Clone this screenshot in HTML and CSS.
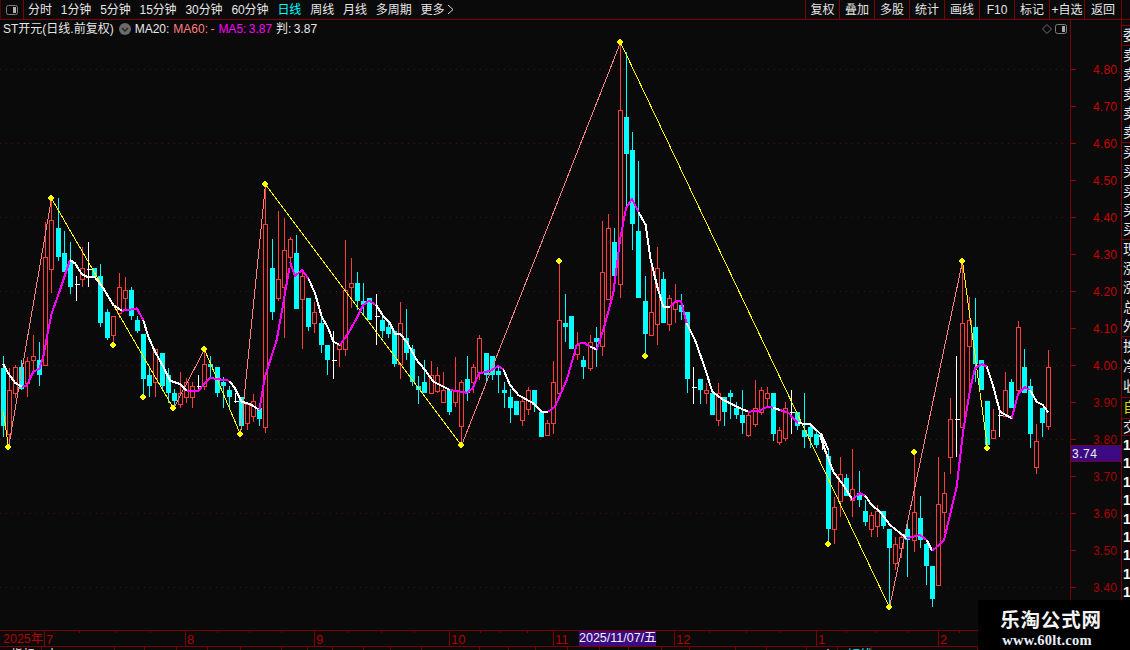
FILE: index.html
```html
<!DOCTYPE html>
<html lang="zh">
<head>
<meta charset="utf-8">
<title>ST开元 日线</title>
<link rel="stylesheet" href="styles.css">
</head>
<body>
<div class="app">
  <header class="toolbar">
    <div class="logo-cell">
      <svg class="split-icon" width="12" height="10" viewBox="0 0 12 10"><rect x=".5" y=".5" width="11" height="9" rx="2" fill="none" stroke="#808080"/><rect x="7" y="2" width="3" height="6" fill="#b0b0b0"/></svg>
    </div>
    <nav class="periods">
      <span>分时</span><span>1分钟</span><span>5分钟</span><span>15分钟</span><span>30分钟</span><span>60分钟</span>
      <span class="active">日线</span><span>周线</span><span>月线</span><span>多周期</span>
      <span class="more">更多<svg width="7" height="11" viewBox="0 0 7 11"><path d="M1 1l5 4.5L1 10" fill="none" stroke="#d8d8d8"/></svg></span>
    </nav>
    <nav class="actions">
      <span class="narrow">复权</span><span>叠加</span><span>多股</span><span>统计</span><span>画线</span><span>F10</span><span>标记</span><span>+自选</span><span class="wide">返回</span>
    </nav>
  </header>

  <main class="main">
    <section class="chart">
      <svg id="plot" class="plot" viewBox="0 20 1070 610" width="1070" height="610"></svg>
      <div class="legend">
        <span>ST开元(日线.前复权)</span>
        <svg class="chev" width="12" height="12" viewBox="0 0 12 12"><circle cx="6" cy="6" r="6" fill="#6a6a6a"/><path d="M3 5l3 3 3-3" fill="none" stroke="#222" stroke-width="1.4"/></svg>
        <span class="l-white">MA20:</span>
        <span class="l-pink">MA60: -</span>
        <span class="l-mag">MA5: 3.87</span>
        <span class="l-white">判: 3.87</span>
      </div>
      <div class="corner">
        <svg width="10" height="10" viewBox="0 0 10 10"><path d="M5 .5L9.5 5 5 9.5 .5 5z" fill="none" stroke="#6e6e6e"/></svg>
        <svg width="12" height="10" viewBox="0 0 12 10"><rect x=".5" y=".5" width="11" height="9" rx="2" fill="none" stroke="#808080"/><rect x="7" y="2" width="3" height="6" fill="#a8a8a8"/></svg>
      </div>
    </section>

    <aside class="axis">
      <div class="tick up">4.80</div><div class="tick up">4.70</div><div class="tick up">4.60</div><div class="tick up">4.50</div>
      <div class="tick up">4.40</div><div class="tick up">4.30</div><div class="tick up">4.20</div><div class="tick up">4.10</div>
      <div class="tick up">4.00</div><div class="tick">3.90</div><div class="tick">3.80</div><div class="tick">3.70</div>
      <div class="tick">3.60</div><div class="tick">3.50</div><div class="tick">3.40</div>
      <div class="cursor-price">3.74</div>
    </aside>

    <aside class="quote">
      <div class="group"><div>委比</div></div>
      <div class="group"><div>卖五</div><div>卖四</div><div>卖三</div><div>卖二</div><div>卖一</div></div>
      <div class="group"><div>买一</div><div>买二</div><div>买三</div><div>买四</div><div>买五</div></div>
      <div class="group"><div>现价</div><div>涨跌</div><div>涨幅</div><div>总手</div><div>外盘</div></div>
      <div class="group tall"><div>换手</div><div>净资</div><div>收益</div></div>
      <div class="group single yellow"><div>自选</div></div>
      <div class="group short"><div>交易</div></div>
      <div class="group nums"><div>1</div><div>1</div><div>1</div><div>1</div><div>1</div><div>1</div><div>1</div><div>1</div><div>1</div></div>
    </aside>
  </main>

  <footer>
    <div id="timeAxis" class="time-axis">
      <svg id="timeTicks" class="time-ticks" width="1130" height="3"></svg>
      <div class="cursor-date">2025/11/07/五</div>
    </div>
    <div id="tabs" class="tabs"></div>
  </footer>

  <div class="watermark">
    <div class="wm-title">乐淘公式网</div>
    <div class="wm-url">www.60lt.com</div>
  </div>
</div>
<script src="chart.js"></script>
</body>
</html>
```

FILE: styles.css
```css
* { box-sizing: border-box; }
html, body { margin: 0; height: 100%; background: #0a0a0a; }
body {
  font: 12px/1 "Liberation Sans", "Noto Sans CJK SC", sans-serif;
  color: #e6e6e6;
  overflow: hidden;
}
.app { position: relative; width: 1130px; height: 650px; display: flex; flex-direction: column; overflow: hidden; }

.toolbar {
  height: 20px; flex: none;
  display: flex; align-items: stretch;
  border-bottom: 1px solid #7d0000;
}
.logo-cell {
  width: 24px; flex: none;
  display: flex; align-items: center; justify-content: center;
  border-left: 1px solid #5a0000; border-right: 1px solid #7d0000;
}
.periods { display: flex; align-items: center; gap: 9px; padding-left: 4px; flex: 1; }
.periods span { letter-spacing: -.1px; }
.periods .active { color: #00ffff; }
.more { display: flex; align-items: center; gap: 3px; }
.actions { display: flex; margin-right: 8px; }
.actions span {
  width: 35px; border-left: 1px solid #7d0000;
  display: flex; align-items: center; justify-content: center;
}
.actions .narrow { width: 34px; }
.actions .wide { width: 38px; border-right: 1px solid #7d0000; }

.main { height: 610px; flex: none; display: flex; }
.chart { position: relative; width: 1070px; flex: none; }
.plot { display: block; }
.legend {
  position: absolute; left: 3px; top: 3px;
  display: flex; align-items: center; gap: 4px; height: 12px; white-space: nowrap; word-spacing: -1px;
}
.chev { margin: 0 0 0 1px; }
.l-white { color: #e8e8e8; }
.l-pink { color: #ff7f7f; }
.l-mag { color: #ff00ff; }
.corner { position: absolute; right: 3px; top: 4px; display: flex; gap: 3px; }

.axis {
  position: relative; width: 52px; flex: none;
  padding-top: 31px;
  border-left: 1px solid #7d0000;
  border-right: 1px solid #7d0000;
}
.tick {
  height: 37px; display: flex; align-items: center;
  color: #a80000; letter-spacing: .2px;
}
.tick.up { color: #c80000; }
.tick::before { content: ""; width: 5px; height: 1px; background: #9a0000; margin-right: 17px; flex: none; }
.cursor-price {
  position: absolute; left: 0; right: 0; top: 425px; height: 17px;
  background: #3c0a82; border: 1px solid #6e0030; border-width: 1px 0;
  color: #f0f0f0; padding: 2px 0 0 1px; letter-spacing: .5px;
}

.quote { width: 8px; flex: none; padding-top: 5px; overflow: hidden; font-size: 14px; white-space: nowrap; color: #e8e8e8; }
.group { border-top: 1px solid #7d0000; }
.group div { height: 19.2px; line-height: 19px; padding-left: 1px; }
.group.tall div { height: 20px; }
.group.single div { height: 20px; }
.group.short div { height: 16px; line-height: 16px; }
.group.yellow { color: #d8d800; }
.group.nums { color: #fff; font-weight: bold; }
.group.nums div { height: 18.4px; line-height: 18px; }

.time-axis {
  position: relative; height: 17px; display: flex;
  border-top: 1px solid #7d0000; border-bottom: 1px solid #7d0000;
  color: #b00000; font-size: 13px;
}
.time-axis .seg { flex: none; padding: 2px 0 0 1px; border-left: 1px solid #7d0000; height: 15px; white-space: nowrap; }
.time-axis .seg.first { border-left: 0; padding-left: 3px; font-size: 12.5px; }
.time-ticks { position: absolute; left: 0; top: 0; }
.cursor-date {
  position: absolute; left: 579px; top: 0; width: 77px; height: 15px;
  background: #3c0a82; color: #f0f0f0; font-size: 12.5px; text-align: center; padding-top: 1px; white-space: nowrap;
}
.tabs { height: 3px; display: flex; overflow: hidden; font-size: 12px; }
.tabs span { flex: none; height: 3px; border-right: 1px solid #7d0000; padding-top: 2px; line-height: 12px; white-space: nowrap; overflow: hidden; color: #e8e8e8; }
.tabs span.cy { color: #00ffff; }

.watermark {
  position: absolute; left: 978px; top: 600px; width: 152px; height: 50px;
  background: #000; color: #f4f4f4; text-align: center; padding: 9px 6px 0 0;
}
.wm-title { font: bold 19.5px/20px "Noto Sans CJK SC", sans-serif; letter-spacing: .8px; }
.wm-url { font: bold 14.5px/14px "Liberation Serif", serif; margin-top: 4px; letter-spacing: .2px; color: #e8f0ff; padding-right: 8px; }
```

FILE: chart.js
```js
// Chart data measured in "sheet" units: x = ox + zx / 3, y = oy + zy / 3.
// Candle row: zx type high top bottom low (doji w: zx w high mid low)
var SHEETS = [
  { ox: 0, oy: 190, c: "10 c 498 535 708 740|28 r 535 600 733 770|46 r 525 532 610 625|64 c 510 532 597 600|82 r 500 512 578 620|100 r 435 499 511 545|118 c 457 511 554 587|136 r 95 202 524 524|154 r 25 91 236 310|175 c 25 114 200 213|193 c 122 189 245 245|211 c 157 215 290 312|229 w 258 281 332|247 r 170 235 268 292|265 w 156 236 292|283 c 235 235 262 265|301 c 222 258 398 410|322 c 357 366 443 450|340 r 378 379 434 458|358 r 250 292 370 385|376 r 262 301 325 360|394 c 292 300 378 390|412 c 378 390 423 430|430 c 432 432 567 612|448 c 530 555 588 620|466 r 478 478 577 620|487 c 489 489 587 600|505 c 535 555 610 640|523 c 597 610 634 650|541 r 547 610 643 653|559 r 565 577 622 640|577 r 577 589 622 653|595 w 555 589 600|613 r 480 522 589 600|631 c 498 522 531 560|652 c 530 531 608 620|670 c 560 575 587 655|688 c 588 600 622 650|706 w 610 634 640|724 c 622 622 708 720|742 r 640 642 700 720|760 r 613 634 677 697|778 c 650 655 687 708|796 r -20 103 710 730|817 c 148 234 365 390|835 r 62 268 325 332|853 r 85 181 292 443" },
  { ox: 290, oy: 230, c: "0 r 20 27 82 110|18 c 15 69 236 236|36 r 120 138 206 356|54 c 205 205 290 303|72 r 215 247 280 310|93 c 255 279 345 368|111 c 345 345 389 435|129 w 303 391 446|147 r 345 345 358 410|165 r 30 181 358 378|183 r 84 160 172 235|201 c 126 159 213 240|219 c 158 213 225 255|237 c 205 205 270 270|258 w 192 259 345|276 c 248 270 303 325|294 c 280 291 312 325|312 c 300 303 402 410|330 r 217 280 402 447|348 c 237 324 369 390|366 c 345 357 456 467|384 c 437 468 480 522|402 c 390 456 489 490|423 r 393 435 490 490|441 r 412 435 482 490|459 r 427 480 515 515|477 c 480 480 545 555|495 r 380 480 515 530|513 r 450 456 589 640|531 c 378 447 490 513|549 r 402 411 457 490|567 r 315 324 425 450|588 c 369 369 435 460|606 c 378 378 435 450|624 c 410 423 435 489|642 c 456 480 489 535|660 c 478 501 534 578|678 c 513 513 555 555|696 r 500 513 570 587|714 r 470 480 536 555|732 c 480 480 525 545|753 c 545 545 620 620|771 r 570 580 614 614|789 r 393 456 580 612|807 r 93 270 490 490|825 c 192 279 291 335|843 c 258 258 357 357|861 r 305 345 371 390" },
  { ox: 580, oy: 40, c: "10 c 948 960 981 1017|31 r 885 907 983 992|49 c 862 894 906 980|67 r 543 697 917 948|85 r 522 565 776 776|103 c 565 606 707 735|121 r 0 211 731 773|139 c 35 231 342 500|157 c 276 330 552 630|175 c 363 573 773 773|196 c 708 783 881 948|214 r 680 817 884 884|232 r 622 685 851 915|250 c 697 717 849 849|268 r 765 775 851 872|286 r 732 785 808 850|304 c 762 795 816 840|322 c 816 816 1017 1058|340 w 982 1040 1092|361 c 1018 1018 1050 1092|379 r 1030 1051 1060 1092|397 c 1060 1060 1125 1125|415 r 1030 1060 1139 1158|433 c 1072 1072 1116 1158|451 c 1050 1060 1072 1138|469 c 1085 1104 1126 1137|487 c 1050 1126 1149 1182|505 r 1115 1126 1185 1192|526 r 1020 1105 1151 1160|544 r 1040 1050 1116 1125|562 r 1040 1060 1073 1105|580 c 1059 1059 1182 1203|598 r 1162 1171 1205 1214|616 r 1085 1105 1193 1203|634 w 1050 1117 1182|652 c 1115 1117 1157 1170|673 c 1060 1170 1192 1225|691 c 1150 1160 1192 1225|709 c 1172 1182 1215 1225|727 w 1182 1205 1230" },
  { ox: 820, oy: 250, c: "24 c 595 618 836 880|43 r 740 772 838 882|61 r 621 673 752 802|79 c 673 684 738 738|97 r 597 718 751 800|118 c 662 730 750 770|136 c 750 783 816 828|154 r 785 796 838 860|172 r 765 783 829 860|190 c 783 783 827 836|208 c 837 837 893 1070|226 r 862 883 940 960|244 r 850 860 895 925|262 c 820 838 870 980|283 r 605 785 871 905|301 c 738 805 870 893|319 c 880 882 948 1005|337 c 948 948 1046 1070|355 r 620 763 1006 1006|373 r 665 730 785 850|391 r 443 508 620 672|409 w 317 508 620|427 r 33 220 530 530|448 r 142 211 287 420|466 c 143 231 342 395|484 c 330 330 420 420|502 c 453 453 585 595|520 r 477 541 563 563|538 w 485 495 560|556 r 365 420 497 497|574 c 387 396 474 474|595 r 212 232 420 430|613 c 297 351 430 430|631 c 387 408 552 593|649 r 522 574 652 672|667 c 475 475 518 560|685 r 300 352 529 540" }
];

// Moving average: sheet index, colour run, points in sheet units
var MA = [
  [0, "w", "10,522 25,550 45,578 65,590"],
  [0, "m", "65,590 80,587 100,545 118,537 130,500 145,420 155,370 180,300 195,255 210,210"],
  [0, "w", "210,210 225,220 245,252 265,262 285,262 310,295 340,345 365,362"],
  [0, "m", "365,362 385,360 410,355 430,390"],
  [0, "w", "430,390 445,440 465,485 490,530 510,572 540,582 560,602"],
  [0, "m", "560,602 595,602 630,563 650,567 688,572"],
  [0, "w", "688,572 705,595 725,635 750,642 778,660"],
  [0, "m", "778,660 795,560 830,450 850,340 868,235"],
  [1, "m", "0,95 15,138 36,120 55,145"],
  [1, "w", "55,145 75,190 95,260 115,295 130,335 150,345"],
  [1, "m", "150,345 175,310 200,265 220,225 237,212 258,225"],
  [1, "w", "258,225 280,258 300,280 315,312 330,312 350,335 380,390 405,420 430,455 480,480"],
  [1, "m", "480,480 530,488 548,475 567,430 600,423 625,408 640,418"],
  [1, "w", "640,418 660,465 685,495 730,520 755,545 775,545"],
  [1, "m", "775,545 795,530 830,450 860,345 869,342"],
  [2, "m", "0,910 12,908 30,920"],
  [2, "w", "30,920 50,928"],
  [2, "m", "50,928 70,870 100,760 120,600 138,505 156,476 175,515"],
  [2, "w", "175,515 197,555 212,660 232,740 250,800 270,800"],
  [2, "m", "270,800 290,782 303,782 320,850"],
  [2, "w", "320,850 345,900 375,985 397,1055 430,1080 470,1100 505,1115"],
  [2, "m", "505,1115 540,1112 562,1100 580,1103"],
  [2, "w", "580,1103 600,1110"],
  [2, "m", "600,1110 625,1118 655,1150"],
  [2, "w", "655,1150 690,1152 725,1185 745,1230"],
  [3, "w", "0,555 15,600 40,665 70,705 97,748"],
  [3, "m", "97,748 120,730 135,737"],
  [3, "w", "135,737 155,765 180,785 210,825 260,865"],
  [3, "m", "260,865 300,855 320,870"],
  [3, "w", "320,870 337,903"],
  [3, "m", "337,903 372,870 410,710 430,540 450,420 465,355 485,342 500,350"],
  [3, "w", "500,350 520,410 540,485 575,505"],
  [3, "m", "575,505 595,430 615,412 630,420"],
  [3, "w", "630,420 650,455 668,465 685,487"]
];

var ZIG = [[3,412],[8,447],[51,198],[173,408],[204,349],[240,434],[265,184],[461,445],[620,42],[889,607],[962,261],[987,448]];
var DOTS = [[8,447],[51,198],[113,345],[143,397],[173,408],[204,349],[240,434],[265,184],[461,445],[559,261],[620,42],[645,356],[828,544],[889,607],[914,452],[962,261],[987,448]];
var COL = { r: "#ff3c3c", c: "#00ffff", w: "#ffffff", p: "#ff8080", y: "#ffff00", m: "#ff00ff", g: "#5a0c0c" };

var NS = "http://www.w3.org/2000/svg";
function el(parent, name, attrs) {
  var n = document.createElementNS(NS, name);
  for (var k in attrs) n.setAttribute(k, attrs[k]);
  parent.appendChild(n);
  return n;
}
function line(parent, x1, y1, x2, y2, color, w) {
  return el(parent, "line", { x1: x1, y1: y1, x2: x2, y2: y2, stroke: color, "stroke-width": w || 1 });
}

var plot = document.getElementById("plot");
var crisp = el(plot, "g", { "shape-rendering": "crispEdges" });

// grid
for (var g = 0; g < 8; g++) {
  var gy = 69.5 + g * 74;
  el(crisp, "line", { x1: 0, y1: gy, x2: 1067, y2: gy, stroke: COL.g, "stroke-dasharray": "1 5" });
}

// candles
SHEETS.forEach(function (s) {
  s.c.split("|").forEach(function (row) {
    var p = row.split(" "), t = p[1];
    var X = function (v) { return s.ox + v / 3; }, Y = function (v) { return Math.round(s.oy + v / 3); };
    var cx = Math.floor(X(+p[0])) + 0.5;
    var hi = Y(+p[2]), a = Y(+p[3]), b = Y(+p[4]), lo = Y(+p[5]);
    if (t === "w") {
      line(crisp, cx, hi, cx, b, COL.w);
      line(crisp, cx - 2, a + 0.5, cx + 3, a + 0.5, COL.w);
    } else if (t === "c") {
      line(crisp, cx, hi, cx, lo, COL.c);
      el(crisp, "rect", { x: cx - 2.5, y: a, width: 5, height: Math.max(b - a, 1), fill: COL.c });
    } else {
      line(crisp, cx, hi, cx, a, COL.r);
      line(crisp, cx, b, cx, lo, COL.r);
      el(crisp, "rect", { x: cx - 2, y: a + 0.5, width: 4, height: b - a, fill: "#0a0a0a", stroke: COL.r });
    }
  });
});

// zigzag: rising pink, falling yellow
for (var i = 1; i < ZIG.length; i++) {
  var col = ZIG[i][1] < ZIG[i - 1][1] ? COL.p : COL.y;
  line(crisp, ZIG[i - 1][0] + 0.5, ZIG[i - 1][1] + 0.5, ZIG[i][0] + 0.5, ZIG[i][1] + 0.5, col);
}

// moving average
MA.forEach(function (run) {
  var s = SHEETS[run[0]];
  var pts = run[2].split(" ").map(function (p) {
    var q = p.split(",");
    return (s.ox + q[0] / 3).toFixed(1) + "," + (s.oy + q[1] / 3).toFixed(1);
  });
  el(crisp, "polyline", { points: pts.join(" "), fill: "none", stroke: run[1] === "w" ? COL.w : COL.m, "stroke-width": 2, "stroke-linejoin": "round" });
});

// markers
DOTS.forEach(function (d) {
  el(plot, "path", { d: "M" + d[0] + " " + (d[1] - 3) + "l3 3-3 3-3-3z", fill: COL.y, stroke: COL.y, "stroke-width": 1 });
});

// time axis labels, placed by the month boundaries
var axis = document.getElementById("timeAxis");
var months = [["2025年", 0], ["7", 44], ["8", 185], ["9", 314], ["10", 449], ["11", 553], ["12", 674], ["1", 816], ["2", 938]];
months.forEach(function (m, i) {
  var next = i + 1 < months.length ? months[i + 1][1] : 1130;
  var seg = document.createElement("div");
  seg.className = i ? "seg" : "seg first";
  seg.style.width = (next - m[1]) + "px";
  seg.textContent = m[0];
  axis.appendChild(seg);
});
var ticks = document.getElementById("timeTicks");
[79,115,150,217,249,281,347,381,414,480,500,527,618,709,746,780,846,876,907,959].forEach(function (x) {
  line(ticks, x + 0.5, 0, x + 0.5, 2, "#7d0000");
});

// bottom tab strip, mostly clipped by the window edge
var tabs = document.getElementById("tabs");
var edges = [42,115,145,177,208,241,282,308,333,364,391,422,480,509,536,568,600,629,662,690,736,767,807,838,872,978];
var prev = 0;
edges.forEach(function (e, i) {
  var t = document.createElement("span");
  t.style.width = (e - prev) + "px";
  if (i === 0) { t.textContent = "指标"; t.style.paddingLeft = "11px"; }
  if (i === 1) { t.textContent = "十"; t.style.paddingLeft = "4px"; }
  if (i === 23) { t.textContent = "卜"; t.style.paddingLeft = "16px"; }
  if (i === 24) { t.textContent = "短线"; t.className = "cy"; t.style.paddingLeft = "10px"; }
  tabs.appendChild(t);
  prev = e;
});
```
